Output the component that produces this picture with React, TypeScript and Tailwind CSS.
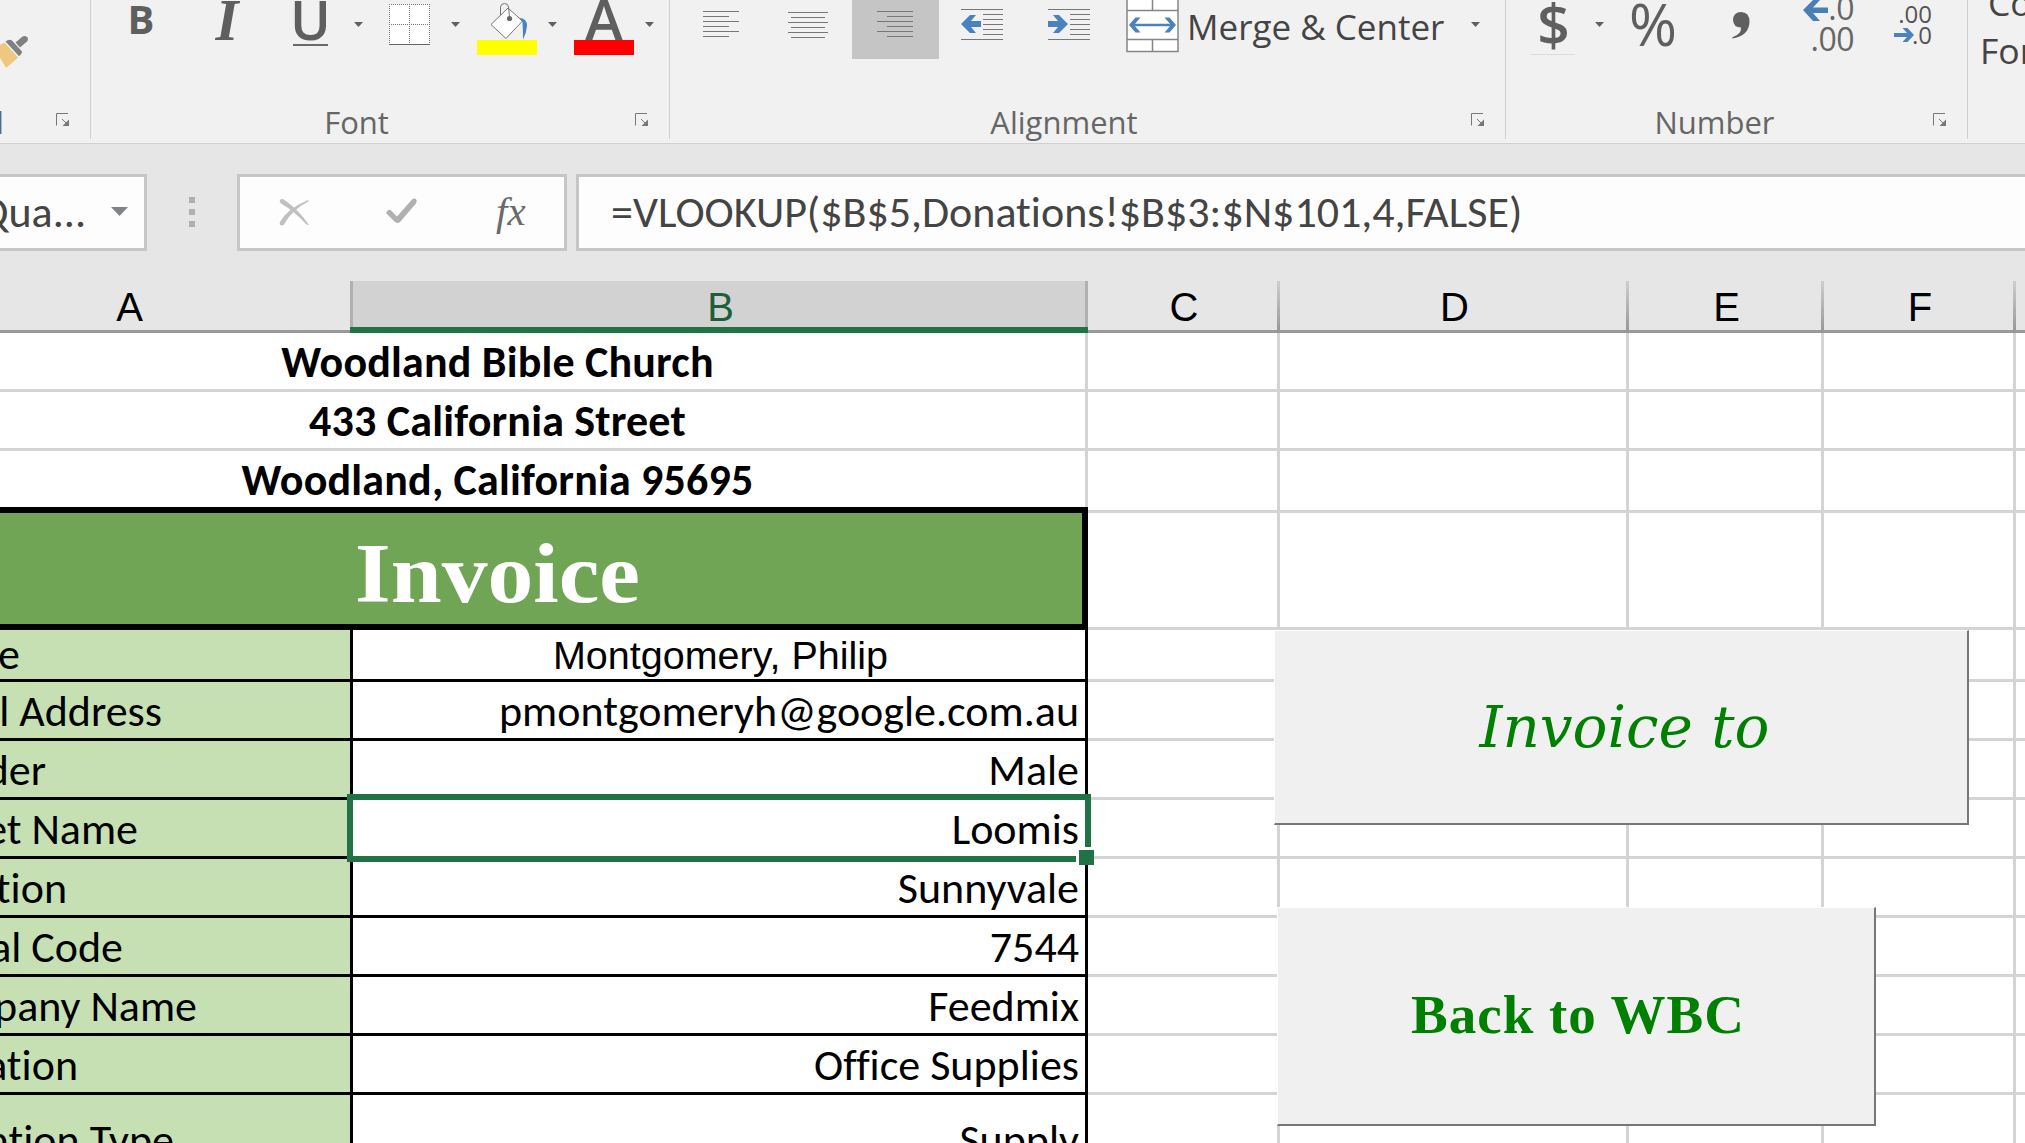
import type { ReactNode } from "react";

const CALIBRI = "font-['Carlito','Lato',sans-serif] [font-variant-ligatures:none]";
const UI = "font-['Open_Sans',sans-serif]";

function Caret({ className = "" }: { className?: string }) {
  return (
    <svg className={"mt-[22px] h-[5px] w-[9px] shrink-0 " + className} viewBox="0 0 9 5">
      <path d="M0 0h9L4.5 5z" fill="#606060" />
    </svg>
  );
}

function Launcher() {
  return (
    <svg className="mt-[53px] ml-[13px] h-[13px] w-[13px] shrink-0" viewBox="0 0 13 13">
      <path d="M.5 12.5V.5H12" fill="none" stroke="#777" />
      <path d="M6 6l5 5" fill="none" stroke="#777" />
      <path d="M13 6.5V13H6.5z" fill="#777" />
    </svg>
  );
}

function Group({
  width,
  label,
  labelClass = "flex-1 text-center",
  children,
}: {
  width: string;
  label: string;
  labelClass?: string;
  children: ReactNode;
}) {
  return (
    <div className={"flex h-[143px] shrink-0 " + width}>
      <div className="flex min-w-0 flex-1 flex-col">
        <div className="flex h-[60px] items-start">{children}</div>
        <div className="flex h-[83px] items-start">
          <div className={"pt-[41px] text-[31px] leading-[42px] text-[#666] " + UI + " " + labelClass}>{label}</div>
          <div className="w-[47px] shrink-0">
            <Launcher />
          </div>
        </div>
      </div>
      <div className="h-[139px] w-px bg-[#d0d0d0]" />
    </div>
  );
}

function Lines({ rows, className }: { rows: [number, number, number][]; className: string }) {
  return (
    <svg className={"shrink-0 " + className} shapeRendering="crispEdges">
      {rows.map(([x, y, w]) => (
        <rect key={y} x={x} y={y} width={w} height="1" fill="#777" />
      ))}
    </svg>
  );
}

function ClipboardGroup() {
  return (
    <Group width="w-[91px]" label="d" labelClass="flex w-[4px] mr-[39px] shrink-0 justify-end">
      <svg className="mt-[35px] h-[34px] w-[30px]" viewBox="0 35 30 34">
        <path d="M-6 48L4.5 42.5L18 57.500L6.200 68Z" fill="#efc77e" />
        <path d="M5.500 41.500Q9 38.500 12 40.500L22 51.500Q22.500 53 19 56.200Z" fill="#808080" />
        <path d="M15.500 42.500L22.500 36.500Q25.500 35 27.700 37.500Q28.500 40 27 41.500L20 47.500Z" fill="#808080" />
      </svg>
    </Group>
  );
}

function FontGroup() {
  return (
    <Group width="w-[579px]" label="Font">
      <div className={"ml-[30px] w-[40px] text-center text-[40px] leading-[37px] font-bold text-[#5f5f5f] " + UI}>B</div>
      <div className="ml-[46px] w-[40px] text-center font-['Liberation_Serif',serif] text-[59px] leading-[41px] font-bold text-[#5f5f5f] italic">
        I
      </div>
      <div className="ml-[46px] h-[46px] w-[35px] border-b-2 border-[#6a6a6a]">
        <div className={"-mx-2 text-center text-[55px] leading-[37px] font-semibold text-[#5f5f5f] " + UI}>U</div>
      </div>
      <Caret className="ml-[26px]" />
      <svg className="mt-[4px] ml-[26px] h-[41px] w-[41px] shrink-0" viewBox="0 0 41 41">
        <rect width="41" height="41" fill="#fff" />
        <path d="M.5 0V41M20.500 0V41M40.500 0V41M0 .5H41M0 20.500H41" stroke="#777" strokeDasharray="1 1" />
        <path d="M0 40.500H41" stroke="#666" />
      </svg>
      <Caret className="ml-[21px]" />
      <div className="ml-[17px] flex h-[55px] w-[60px] flex-col items-center">
        <svg className="h-[40px] w-[60px]" viewBox="0 0 60 40">
          <path d="M14 24.500L31 8L45.500 21L29 38.500Z" fill="#fff" stroke="#777" />
          <path d="M23.500 15V7Q24 3.500 27.500 3.500Q31 3.500 31.500 7L32.500 17" fill="none" stroke="#777" />
          <circle cx="32.500" cy="18.500" r="2.600" fill="#666" />
          <path d="M42 18Q50 18 50 26Q49.500 33 46 39.500Q46 30 45.500 22Z" fill="#4a82bd" />
        </svg>
        <div className="h-[15px] w-full bg-[#ff0]" />
      </div>
      <Caret className="ml-[11px]" />
      <div className="ml-[17px] flex h-[55px] w-[60px] flex-col">
        <div className={"h-[40px] overflow-hidden text-center text-[58px] leading-[38px] font-semibold text-[#5f5f5f] " + UI}>
          A
        </div>
        <div className="h-[15px] w-full bg-[#f00]" />
      </div>
      <Caret className="ml-[11px]" />
    </Group>
  );
}

const INDENT: [number, number, number][] = [
  [0, 0, 42],
  [22, 5, 20],
  [22, 10, 20],
  [22, 15, 20],
  [22, 20, 20],
  [22, 25, 20],
  [0, 30, 42],
];

function AlignmentGroup() {
  return (
    <Group width="w-[836px]" label="Alignment">
      <Lines
        className="mt-[11px] ml-[33px] h-[26px] w-[36px]"
        rows={[[0, 0, 36], [0, 5, 26], [0, 10, 36], [0, 15, 26], [0, 20, 36], [0, 25, 26]]}
      />
      <Lines
        className="mt-[12px] ml-[49px] h-[26px] w-[40px]"
        rows={[[0, 0, 40], [3, 5, 34], [0, 10, 40], [3, 15, 34], [0, 20, 40], [3, 25, 34]]}
      />
      <div className="ml-[24px] h-[59px] w-[87px] bg-[#c5c5c5]">
        <Lines
          className="mt-[11px] ml-[25px] h-[26px] w-[36px]"
          rows={[[0, 0, 36], [10, 5, 26], [0, 10, 36], [10, 15, 26], [0, 20, 36], [10, 25, 26]]}
        />
      </div>
      <div className="mt-[9px] ml-[22px] grid h-[31px] w-[42px] shrink-0">
        <Lines className="col-start-1 row-start-1 h-[31px] w-[42px]" rows={INDENT} />
        <svg className="col-start-1 row-start-1 h-[31px] w-[42px]" viewBox="0 0 42 31">
          <path d="M0 15L9 6H15L10 12H20V18H10L15 24H9Z" fill="#4a82bd" />
        </svg>
      </div>
      <div className="mt-[9px] ml-[45px] grid h-[31px] w-[42px] shrink-0">
        <Lines className="col-start-1 row-start-1 h-[31px] w-[42px]" rows={INDENT} />
        <svg className="col-start-1 row-start-1 h-[31px] w-[42px]" viewBox="0 0 42 31">
          <path d="M20 15L11 6H5L10 12H0V18H10L5 24H11Z" fill="#4a82bd" />
        </svg>
      </div>
      <svg className="ml-[36px] h-[53px] w-[53px] shrink-0" viewBox="0 0 53 53">
        <rect x="1" y="-5" width="51" height="56.500" fill="#fff" stroke="#858585" strokeWidth="1.500" />
        <path d="M1 10.500H52M1 39.500H52M26.500 0V10.500M26.500 39.500V52" stroke="#858585" strokeWidth="1.500" />
        <path d="M5 25H48" stroke="#4a82bd" strokeWidth="2.500" />
        <path d="M3 25L9.500 17.500H14.500L8 25L14.500 32.500H9.500ZM50 25L43.500 17.500H38.500L45 25L38.500 32.500H43.500Z" fill="#4a82bd" />
      </svg>
      <div className={"ml-[8px] w-[262px] shrink-0 text-[35px] leading-[53px] whitespace-nowrap text-[#444] " + UI}>
        Merge &amp; Center
      </div>
      <Caret className="ml-[22px]" />
    </Group>
  );
}

function NumberGroup() {
  return (
    <Group width="w-[462px]" label="Number" labelClass="flex-1 pl-[3px] text-center">
      <div className="ml-[24px] h-[55px] w-[45px] border-b border-[#dcdcdc]">
        <div className={"pl-[2px] text-center text-[57px] leading-[48px] font-semibold text-[#5f5f5f] " + UI}>$</div>
      </div>
      <Caret className="ml-[20px]" />
      <div className={"ml-[21px] w-[56px] text-center text-[58px] leading-[48px] font-medium text-[#5f5f5f] " + UI}>%</div>
      <svg className="mt-[12px] ml-[51px] h-[27px] w-[18px] shrink-0" viewBox="0 0 18 27">
        <path d="M9 0Q17.500 0 17.500 10Q17 24 0 26.500Q0 25.500 1 25Q9.500 22 9 15.500Q1.500 15.500 1 8Q1.500 0 9 0Z" fill="#5f5f5f" />
      </svg>
      <div className={"ml-[50px] flex w-[54px] flex-col items-end text-[32px] leading-[30px] text-[#666] " + UI}>
        <div className="-mt-[7px] flex h-[31px] items-start">
          <svg className="mt-[7px] h-[21px] w-[25px]" viewBox="0 0 25 21">
            <path d="M0 10L10 0H17L10 7.500H25V13H10L17 21H10Z" fill="#4a7fb5" />
          </svg>
          <span className="tracking-[-0.5px]">.0</span>
        </div>
        <span className="tracking-[-0.5px]">.00</span>
      </div>
      <div className={"mt-[3px] ml-[38px] flex w-[40px] flex-col items-end text-[24px] leading-[21px] text-[#555] " + UI}>
        <span>.00</span>
        <div className="flex h-[21px] items-start">
          <svg className="mt-[4px] -mr-[2px] h-[14px] w-[20px]" viewBox="0 0 20 14">
            <path d="M20 7L13.500 0H8.500L13 5H0V9H13L8.500 14H13.500Z" fill="#4a82bd" />
          </svg>
          <span>.0</span>
        </div>
      </div>
    </Group>
  );
}

function Ribbon() {
  return (
    <div className="flex h-[144px] overflow-hidden border-b border-[#d0d0d0] bg-[#f1f1f1]">
      <ClipboardGroup />
      <FontGroup />
      <AlignmentGroup />
      <NumberGroup />
      <div className={"w-[57px] overflow-hidden pl-[12px] text-[35.5px] leading-[48px] whitespace-nowrap text-[#444] " + UI}>
        <div className="-mt-[22px] pl-[8px]">Co</div>
        <div>Formatting</div>
      </div>
    </div>
  );
}

function FormulaBar() {
  return (
    <div className="flex h-[137px] items-start bg-[#e6e6e6] pt-[30px]">
      <div className={"flex h-[77px] w-[147px] border-y-3 border-r-3 border-[#c6c6c6] bg-[#fdfdfd] text-[44px] leading-[71px] text-[#444] " + CALIBRI}>
        <div className="flex w-[86px] shrink-0 justify-end whitespace-nowrap">Qua...</div>
        <svg className="mt-[30px] ml-[25px] h-[9px] w-[17px] shrink-0" viewBox="0 0 17 9">
          <path d="M0 0H17L8.500 9Z" fill="#7f8586" />
        </svg>
      </div>
      <div className="mt-[23px] ml-[42px] flex w-[6px] flex-col gap-[6px]">
        <div className="h-[6px] bg-[#b0b0b0]" />
        <div className="h-[6px] bg-[#b0b0b0]" />
        <div className="h-[6px] bg-[#b0b0b0]" />
      </div>
      <div className="ml-[42px] flex h-[77px] w-[330px] border-3 border-[#c6c6c6] bg-[#fdfdfd]">
        <svg className="mt-[21px] ml-[39px] h-[28px] w-[31px]" viewBox="0 0 31 28">
          <path d="M1 2Q3 0 5.500 2Q20 12 30 27Q28 27 27 26Q15 13 2 5.500Q0 4 1 2Z" fill="#c0c0c0" />
          <path d="M30 3Q29 1.500 27 3Q8 11 1 24Q0 27 2.500 27.500Q5 27.500 6 25Q13 12 30 3Z" fill="#c0c0c0" />
        </svg>
        <svg className="mt-[21px] ml-[76px] h-[26px] w-[31px]" viewBox="0 0 31 26">
          <path d="M0 15Q2 11 4.500 12L11 18.500L26 1.500Q29 -0.500 30.500 2Q31 4 29.500 6L14 24Q11.500 26 9 24Z" fill="#b0b0b0" />
        </svg>
        <div className="ml-[79px] font-['Liberation_Serif',serif] text-[41px] leading-[68px] whitespace-nowrap text-[#6a6a6a] italic">
          fx
        </div>
      </div>
      <div className={"ml-[9px] h-[77px] flex-1 overflow-hidden border-y-3 border-l-3 border-[#c6c6c6] bg-[#fdfdfd] pl-[32px] text-[44px] leading-[71px] whitespace-nowrap text-[#444] " + CALIBRI}>
        =VLOOKUP($B$5,Donations!$B$3:$N$101,4,FALSE)
      </div>
    </div>
  );
}

function HeaderCell({ name }: { name: string }) {
  return (
    <div className="flex h-[52px] border-b-3 border-[#999] bg-[#e6e6e6]">
      <div className="h-[49px] min-w-0 flex-1 pl-[3px] text-center text-[40px] leading-[52px]">{name}</div>
      {name !== "" && <div className="w-[3px] bg-linear-to-b from-[#cfcfcf] to-[#999]" />}
    </div>
  );
}

const EMPTY_COLUMNS = ["C", "D", "E", "F", "G"];

function EmptyCells() {
  return (
    <>
      {EMPTY_COLUMNS.map((c) => (
        <div key={c} className={"border-b-3 border-[#d4d4d4] " + (c === "G" ? "" : "border-r-3")} />
      ))}
    </>
  );
}

const ADDRESS = [
  { text: "Woodland Bible Church", line: "h-[3px] bg-[#d4d4d4]" },
  { text: "433 California Street", line: "h-[3px] bg-[#d4d4d4]" },
  { text: "Woodland, California 95695", line: "h-[6px] bg-black" },
];

const FIELDS = [
  { label: "l Address", labelWidth: "w-[162px]", value: "pmontgomeryh@google.com.au" },
  { label: "der", labelWidth: "w-[46px]", value: "Male" },
  { label: "et Name", labelWidth: "w-[138px]", value: "Loomis" },
  { label: "tion", labelWidth: "w-[67px]", value: "Sunnyvale" },
  { label: "al Code", labelWidth: "w-[123px]", value: "7544" },
  { label: "pany Name", labelWidth: "w-[197px]", value: "Feedmix" },
  { label: "ation", labelWidth: "w-[78px]", value: "Office Supplies" },
];

const LABEL_CELL = "flex overflow-hidden border-r-3 border-b-3 border-black bg-[#c6e0b4]";

function Sheet() {
  return (
    <div className="relative h-[862px] overflow-hidden bg-white">
      <div className="grid grid-cols-[353px_735px_192px_349px_195px_192px_9px] grid-rows-[52px_59px_59px_62px_117px_52px_repeat(7,59px)_60px] font-['Liberation_Sans',sans-serif] text-black">
        <div className="flex h-[52px]">
          <div className="w-[350px] border-b-3 border-[#999] bg-[#e6e6e6]">
            <div className="w-[259px] text-center text-[40px] leading-[52px]">A</div>
          </div>
          <div className="flex w-[3px] flex-col">
            <div className="flex-1 bg-[#b0b0b0]" />
            <div className="h-[6px] bg-[#217346]" />
          </div>
        </div>
        <div className="flex h-[52px] flex-col">
          <div className="flex h-[46px] bg-[#d2d2d2]">
            <div className="w-[732px] pl-[3px] text-center text-[40px] leading-[52px] text-[#1d5f3a]">B</div>
            <div className="w-[3px] bg-[#b0b0b0]" />
          </div>
          <div className="h-[6px] bg-[#217346]" />
        </div>
        <HeaderCell name="C" />
        <HeaderCell name="D" />
        <HeaderCell name="E" />
        <HeaderCell name="F" />
        <HeaderCell name="" />

        {ADDRESS.map((row) => (
          <div key={row.text} className="contents">
            <div className="col-span-2 flex flex-col">
              <div className="min-h-0 flex-1 border-r-3 border-[#d4d4d4]">
                <div className={"w-[995px] pt-px text-center text-[44px] leading-[56px] font-bold tracking-[0.2px] whitespace-nowrap " + CALIBRI}>
                  {row.text}
                </div>
              </div>
              <div className={row.line} />
            </div>
            <EmptyCells />
          </div>
        ))}

        <div className="col-span-2 border-r-6 border-b-6 border-black bg-[#71a556]">
          <div className="w-[995px] scale-x-[1.09] pt-[5px] text-center font-['Liberation_Serif',serif] text-[84px] leading-[111px] font-bold text-white">
            Invoice
          </div>
        </div>
        <EmptyCells />

        <div className={LABEL_CELL}>
          <div className={"flex w-[20px] shrink-0 justify-end text-[44px] leading-[49px] " + CALIBRI}>e</div>
        </div>
        <div className="border-r-3 border-b-3 border-black pt-px pl-[3px] text-center text-[39.5px] leading-[49px]">
          Montgomery, Philip
        </div>
        <EmptyCells />

        {FIELDS.map((f) => (
          <div key={f.label} className="contents">
            <div className={LABEL_CELL}>
              <div className={"flex shrink-0 justify-end pt-px text-[44px] leading-[56px] whitespace-nowrap " + CALIBRI + " " + f.labelWidth}>
                {f.label}
              </div>
            </div>
            <div className={"border-r-3 border-b-3 border-black pt-px pr-[6px] text-right text-[44px] leading-[56px] " + CALIBRI}>{f.value}</div>
            <EmptyCells />
          </div>
        ))}

        <div className={LABEL_CELL}>
          <div className={"flex w-[174px] shrink-0 justify-end text-[44px] leading-[90px] whitespace-nowrap " + CALIBRI}>ation Type</div>
        </div>
        <div className={"overflow-hidden border-r-3 border-black pr-[6px] text-right text-[44px] leading-[90px] " + CALIBRI}>Supply</div>
        <EmptyCells />
      </div>

      {/* Active cell outline and its fill handle */}
      <div className="absolute top-[513px] left-[347px] h-[68px] w-[744px] border-6 border-[#217346]" />
      <div className="absolute top-[566px] left-[1076px] h-[18px] w-[18px] bg-white pt-[3px] pl-[3px]">
        <div className="h-[15px] w-[15px] bg-[#217346]" />
      </div>

      {/* Form buttons that float over the cells */}
      <button className="absolute top-[349px] left-[1274px] h-[195px] w-[695px] border-t border-r-2 border-b-2 border-l border-t-white border-r-[#777] border-b-[#777] border-l-white bg-[#f0f0f0] pl-[7px] font-['DejaVu_Serif',serif] text-[58px] leading-[192px] text-[#008000] italic">
        Invoice to
      </button>
      <button className="absolute top-[626px] left-[1277px] h-[219px] w-[599px] border-t border-r-2 border-b-2 border-l border-t-white border-r-[#777] border-b-[#777] border-l-white bg-[#f0f0f0] pb-[3px] pl-[4px] font-['Liberation_Serif',serif] text-[55px] leading-[210px] font-bold tracking-[1px] text-[#008000]">
        Back to WBC
      </button>
    </div>
  );
}

export default function App() {
  return (
    <div className="h-[1143px] w-[2025px] overflow-hidden bg-[#e6e6e6]">
      <Ribbon />
      <FormulaBar />
      <Sheet />
    </div>
  );
}
